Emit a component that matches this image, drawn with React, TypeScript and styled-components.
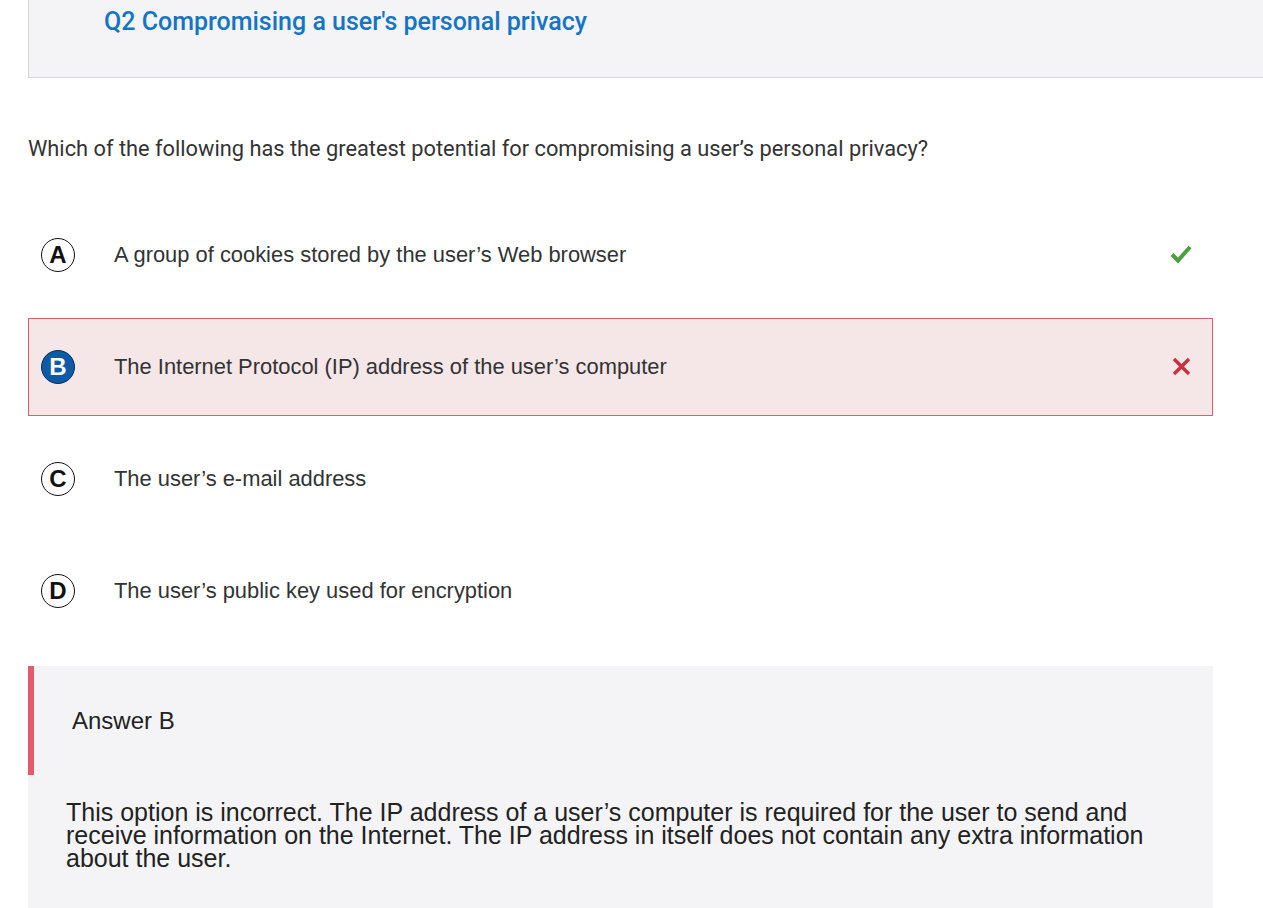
import React from "react";
import styled, { createGlobalStyle } from "styled-components";

const Global = createGlobalStyle`
  html, body { margin: 0; padding: 0; background: #ffffff; }
  body { font-family: "Liberation Sans", Arial, sans-serif; color: #333; overflow: hidden; }
`;

const Page = styled.div`
  width: 1263px;
  height: 908px;
  overflow: hidden;
  display: flex;
  flex-direction: column;
`;

const Header = styled.div`
  margin-left: 28px;
  height: 78px;
  background: #f4f4f6;
  border-left: 1px solid #d6d6d8;
  border-bottom: 1px solid #d6d6d8;
  box-sizing: border-box;
  padding: 7px 0 0 75px;
`;

const Title = styled.h2`
  margin: 0;
  font-family: Roboto, "Liberation Sans", sans-serif;
  font-weight: 500;
  font-size: 25px;
  line-height: 30px;
  color: #1574c4;
`;

const Question = styled.p`
  margin: 57px 0 0 28px;
  font-family: Roboto, "Liberation Sans", sans-serif;
  font-size: 21.8px;
  line-height: 28px;
  color: #333;
`;

const Options = styled.div`
  margin: 43px 0 0 28px;
  width: 1185px;
  display: flex;
  flex-direction: column;
  gap: 14px;
`;

const Row = styled.div<{ $wrong?: boolean }>`
  height: 98px;
  box-sizing: border-box;
  display: flex;
  align-items: center;
  padding: 0 19px 0 12px;
  border: 1px solid ${(p) => (p.$wrong ? "#d7606c" : "transparent")};
  background: ${(p) => (p.$wrong ? "#f5e6e8" : "transparent")};
`;

const Badge = styled.div<{ $selected?: boolean }>`
  width: 34px;
  height: 34px;
  box-sizing: border-box;
  border-radius: 50%;
  border: 1.5px solid ${(p) => (p.$selected ? "#062f5a" : "#111")};
  background: ${(p) => (p.$selected ? "#0d5aa7" : "#fff")};
  color: ${(p) => (p.$selected ? "#fff" : "#111")};
  display: flex;
  align-items: center;
  justify-content: center;
  font-family: "Liberation Sans", Arial, sans-serif;
  font-weight: 700;
  font-size: 24px;
  line-height: 1;
  flex: none;
`;

const OptionText = styled.div`
  margin-left: 39px;
  flex: 1;
  font-family: "Liberation Sans", Arial, sans-serif;
  font-size: 21.9px;
  color: #333;
`;

const Mark = styled.div`
  width: 24px;
  height: 24px;
  display: flex;
  align-items: center;
  justify-content: center;
  margin-top: -2px;
`;

const AnswerBox = styled.div`
  margin: 26px 0 0 28px;
  width: 1185px;
  flex: 1;
  background: #f4f4f6;
  display: flex;
  flex-direction: column;
`;

const AnswerHead = styled.div`
  height: 109px;
  border-left: 6px solid #e45a6a;
  box-sizing: border-box;
  padding-left: 38px;
  display: flex;
  align-items: center;
  font-family: "Liberation Sans", Arial, sans-serif;
  font-size: 24px;
  color: #222;
`;

const Explanation = styled.p`
  margin: 26px 0 0 38px;
  width: 1100px;
  font-family: "Liberation Sans", Arial, sans-serif;
  font-size: 25px;
  line-height: 23px;
  color: #222;
`;

const Check = () => (
  <svg width="22" height="20" viewBox="0 0 22 20">
    <path d="M2 10.5 L8 16.5 L20 3" fill="none" stroke="#4c9f3e" strokeWidth="4" strokeLinecap="butt" strokeLinejoin="miter" />
  </svg>
);

const Cross = () => (
  <svg width="19" height="19" viewBox="0 0 19 19">
    <path d="M2 2 L17 17 M17 2 L2 17" fill="none" stroke="#c8323f" strokeWidth="3.4" />
  </svg>
);

const options = [
  { letter: "A", text: "A group of cookies stored by the user’s Web browser", mark: "check" },
  { letter: "B", text: "The Internet Protocol (IP) address of the user’s computer", mark: "cross", selected: true },
  { letter: "C", text: "The user’s e-mail address" },
  { letter: "D", text: "The user’s public key used for encryption" },
];

export default function App() {
  return (
    <>
      <Global />
      <Page>
        <Header>
          <Title>Q2 Compromising a user's personal privacy</Title>
        </Header>
        <Question>Which of the following has the greatest potential for compromising a user’s personal privacy?</Question>
        <Options>
          {options.map((o) => (
            <Row key={o.letter} $wrong={o.selected}>
              <Badge $selected={o.selected}>{o.letter}</Badge>
              <OptionText>{o.text}</OptionText>
              <Mark>{o.mark === "check" ? <Check /> : o.mark === "cross" ? <Cross /> : null}</Mark>
            </Row>
          ))}
        </Options>
        <AnswerBox>
          <AnswerHead>Answer B</AnswerHead>
          <Explanation>
            This option is incorrect. The IP address of a user’s computer is required for the user to send and receive information on the Internet. The IP address in itself does not contain any extra information about the user.
          </Explanation>
        </AnswerBox>
      </Page>
    </>
  );
}
